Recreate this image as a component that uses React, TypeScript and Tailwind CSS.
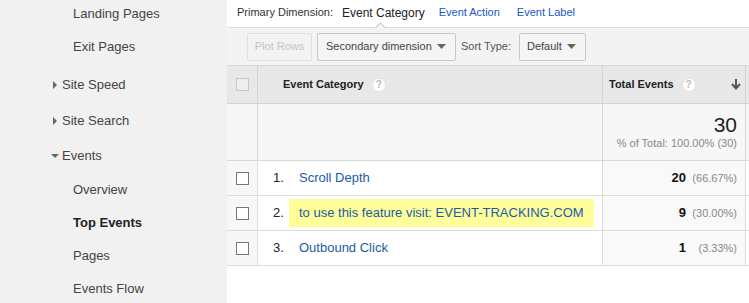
import React from "react";

const font = { fontFamily: '"Liberation Sans", Arial, sans-serif' };

function RightTri() {
  return (
    <svg width="4" height="8" viewBox="0 0 4 8" className="mr-[5px]">
      <path d="M0 0 L4 4 L0 8 Z" fill="#666" />
    </svg>
  );
}
function DownTri() {
  return (
    <svg width="8" height="4" viewBox="0 0 8 4" className="mr-[3px]">
      <path d="M0 0 L8 0 L4 4 Z" fill="#666" />
    </svg>
  );
}

function Caret() {
  return (
    <svg width="9" height="5" viewBox="0 0 9 5">
      <path d="M0 0 L9 0 L4.5 5 Z" fill="#666" />
    </svg>
  );
}

function Help() {
  return (
    <span className="inline-flex items-center justify-center w-[14px] h-[14px] rounded-full bg-white border border-[#e2e2e2] text-[10px] font-bold text-[#bbb] leading-none">
      ?
    </span>
  );
}

function Checkbox() {
  return <div className="w-[13px] h-[13px] border border-[#777] bg-white" />;
}

function SideItem({
  h,
  children,
  pl,
  bold,
}: {
  h: string;
  children: React.ReactNode;
  pl: string;
  bold?: boolean;
}) {
  return (
    <div
      className={`${h} ${pl} shrink-0 flex items-center text-[13px] ${
        bold ? "font-bold text-[#222]" : "text-[#444]"
      }`}
    >
      {children}
    </div>
  );
}

export default function App() {
  const rows = [
    { n: "1.", label: "Scroll Depth", v: "20", p: "(66.67%)", hl: false },
    {
      n: "2.",
      label: "to use this feature visit: EVENT-TRACKING.COM",
      v: "9",
      p: "(30.00%)",
      hl: true,
    },
    { n: "3.", label: "Outbound Click", v: "1", p: "(3.33%)", hl: false },
  ];
  return (
    <div className="flex w-[749px] h-[303px] overflow-hidden bg-white" style={font}>
      {/* sidebar */}
      <div className="w-[227px] shrink-0 bg-[#f1f1f1] flex flex-col overflow-hidden">
        <SideItem h="h-[27px]" pl="pl-[73px]">Landing Pages</SideItem>
        <SideItem h="h-[39px]" pl="pl-[73px]">Exit Pages</SideItem>
        <SideItem h="h-[38px]" pl="pl-[53px]">
          <RightTri />
          Site Speed
        </SideItem>
        <SideItem h="h-[33px]" pl="pl-[53px]">
          <RightTri />
          Site Search
        </SideItem>
        <SideItem h="h-[37px]" pl="pl-[51px]">
          <DownTri />
          Events
        </SideItem>
        <SideItem h="h-[32px]" pl="pl-[73px]">Overview</SideItem>
        <SideItem h="h-[34px]" pl="pl-[73px]" bold>
          Top Events
        </SideItem>
        <SideItem h="h-[32px]" pl="pl-[73px]">Pages</SideItem>
        <SideItem h="h-[34px]" pl="pl-[73px]">Events Flow</SideItem>
      </div>

      {/* main */}
      <div className="flex-1 flex flex-col">
        {/* primary dimension bar */}
        <div className="relative h-[28px] shrink-0 border-b border-[#ddd] bg-white flex items-center pl-[10px] pb-[2px] text-[11px]">
          <span className="text-[#333]">Primary Dimension:</span>
          <span className="ml-[9px] text-[12px] text-[#222]">Event Category</span>
          <span className="ml-[14px] text-[#1a55c8]">Event Action</span>
          <span className="ml-[17px] text-[#1a55c8]">Event Label</span>
          <div className="absolute left-[148px] bottom-[-1px] w-[11px] h-[6px] overflow-hidden">
            <div className="w-[8px] h-[8px] bg-[#f3f3f3] border-l border-t border-[#ccc] rotate-45 translate-x-[1.5px] translate-y-[2px]" />
          </div>
        </div>

        {/* toolbar */}
        <div className="h-[37px] shrink-0 bg-[#f3f3f3] flex items-center pl-[20px] text-[11px]">
          <div className="h-[28px] w-[65px] border border-[#e0e0e0] rounded-[2px] flex items-center justify-center text-[#c4c4c4]">
            Plot Rows
          </div>
          <div className="ml-[5px] h-[28px] w-[139px] border border-[#c8c8c8] rounded-[2px] bg-[#f5f5f5] flex items-center pl-[8px] pr-[9px] justify-between text-[#444]">
            <span>Secondary dimension</span>
            <Caret />
          </div>
          <span className="ml-[5px] text-[#555]">Sort Type:</span>
          <div className="ml-[8px] h-[28px] w-[67px] border border-[#c8c8c8] rounded-[2px] bg-[#f5f5f5] flex items-center pl-[7px] pr-[9px] justify-between text-[#444]">
            <span>Default</span>
            <Caret />
          </div>
        </div>

        {/* table */}
        <div className="grid grid-cols-[31px_345px_143px_1fr] border-t border-[#d8d8d8]">
          {/* header */}
          <div className="h-[38px] bg-[#e8e8e8] border-r border-b border-[#d4d4d4] flex items-center justify-center">
            <div className="w-[13px] h-[13px] border border-[#c8c8c8] bg-[#eee]" />
          </div>
          <div className="h-[38px] bg-[#e8e8e8] border-r border-b border-[#d4d4d4] flex items-center pl-[25px] text-[11px] font-bold text-[#222]">
            Event Category
            <span className="ml-[8px]">
              <Help />
            </span>
          </div>
          <div className="h-[38px] bg-[#e8e8e8] border-r border-b border-[#d4d4d4] flex items-center pl-[6px] pr-[4px] text-[11px] font-bold text-[#222]">
            Total Events
            <span className="ml-[8px]">
              <Help />
            </span>
            <svg width="10" height="11" viewBox="0 0 10 11" className="ml-auto">
              <path d="M5 0 V9 M1 5 L5 9.5 L9 5" stroke="#555" strokeWidth="2" fill="none" />
            </svg>
          </div>
          <div className="h-[38px] bg-[#e8e8e8] border-b border-[#d4d4d4]" />

          {/* summary */}
          <div className="h-[57px] bg-[#f7f7f7] border-r border-b border-[#d8d8d8]" />
          <div className="h-[57px] bg-[#f7f7f7] border-r border-b border-[#d8d8d8]" />
          <div className="h-[57px] bg-[#f7f7f7] border-r border-b border-[#d8d8d8] flex flex-col items-end pr-[8px] pt-[9px]">
            <span className="text-[21px] leading-[24px] text-[#222]">30</span>
            <span className="text-[11px] leading-[13px] text-[#888]">% of Total: 100.00% (30)</span>
          </div>
          <div className="h-[57px] bg-[#f7f7f7] border-b border-[#d8d8d8]" />

          {rows.map((r) => (
            <React.Fragment key={r.n}>
              <div className="h-[35px] bg-[#f7f7f7] border-r border-b border-[#ddd] flex items-center justify-center">
                <Checkbox />
              </div>
              <div className="h-[35px] bg-white border-r border-b border-[#ddd] flex items-center text-[13px]">
                <span className="ml-[15px] w-[26px] text-[#222]">{r.n}</span>
                {r.hl ? (
                  <span className="-ml-[10px] h-[28px] bg-[#ffff99] flex items-center px-[10px] text-[#1a5ba6]">
                    {r.label}
                  </span>
                ) : (
                  <span className="text-[#1a5ba6]">{r.label}</span>
                )}
              </div>
              <div className="h-[35px] bg-[#f9f9f9] border-r border-b border-[#ddd] flex items-center justify-end pr-[8px]">
                <span className="text-[13px] font-bold text-[#111]">{r.v}</span>
                <span className="ml-[6px] w-[45px] text-right text-[11px] text-[#888]">{r.p}</span>
              </div>
              <div className="h-[35px] bg-white border-b border-[#ddd]" />
            </React.Fragment>
          ))}
        </div>
        <div className="flex-1 bg-white" />
      </div>
    </div>
  );
}
